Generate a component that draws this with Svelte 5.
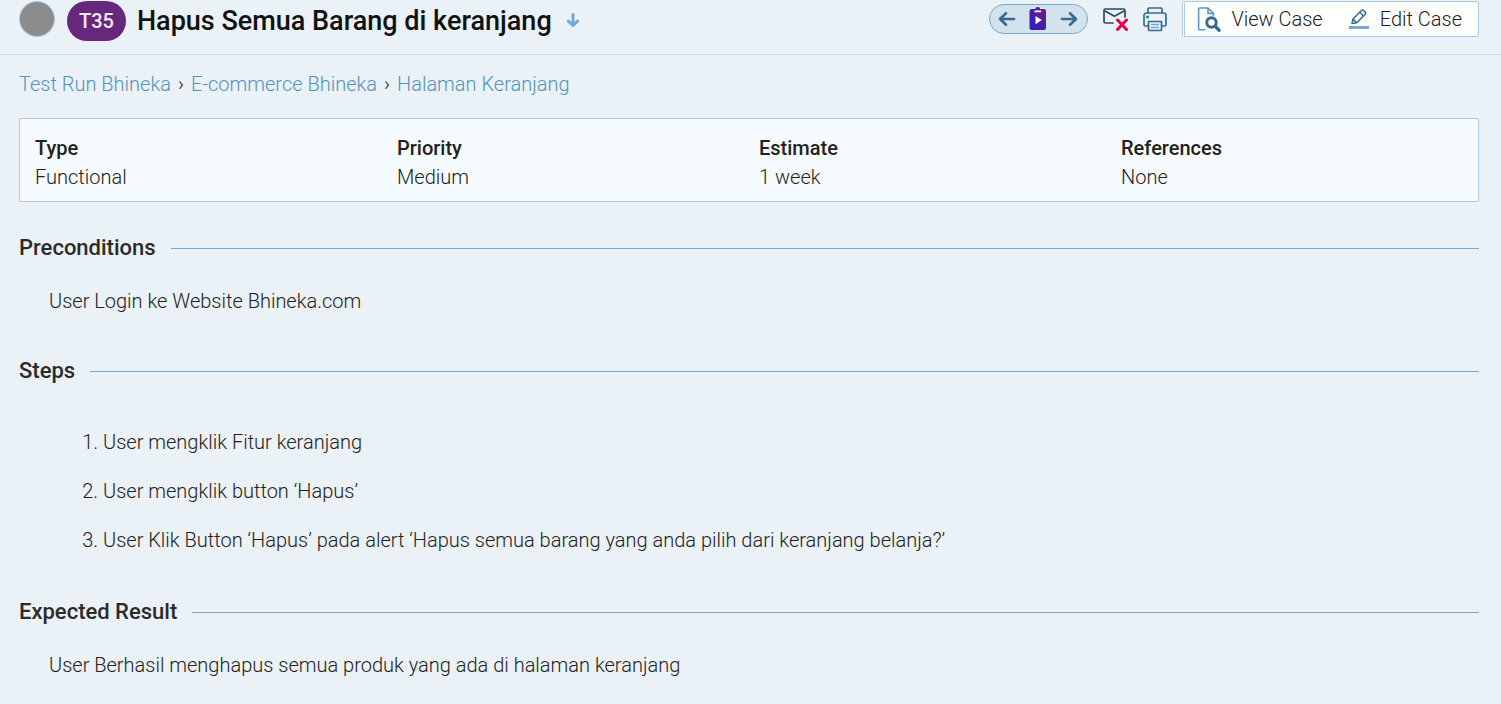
<script>
  const crumbs = ['Test Run Bhineka', 'E-commerce Bhineka', 'Halaman Keranjang'];
  const fields = [
    { label: 'Type', value: 'Functional' },
    { label: 'Priority', value: 'Medium' },
    { label: 'Estimate', value: '1 week' },
    { label: 'References', value: 'None' }
  ];
  const steps = [
    'User mengklik Fitur keranjang',
    'User mengklik button ‘Hapus’',
    'User Klik Button ‘Hapus’ pada alert ‘Hapus semua barang yang anda pilih dari keranjang belanja?’'
  ];
</script>

<header>
  <span class="status"></span>
  <span class="badge">T35</span>
  <h1>Hapus Semua Barang di keranjang</h1>
  <button class="plain" aria-label="Jump down">
    <svg width="14" height="16" viewBox="0 0 14 16" fill="none" stroke="#76a9cf" stroke-width="3" stroke-linecap="round" stroke-linejoin="round">
      <path d="M7 1.500v11M2.300 8.100 7 12.500l4.700-4.400" />
    </svg>
  </button>

  <div class="tools">
    <div class="pager">
      <button class="plain" aria-label="Previous test">
        <svg width="18" height="16" viewBox="0 0 18 16" fill="none" stroke="#386a8e" stroke-width="2.600" stroke-linecap="round" stroke-linejoin="round">
          <path d="M16 8H2.500M8 2.200 2 8l6 5.800" />
        </svg>
      </button>
      <button class="plain" aria-label="Run test">
        <svg width="18" height="24" viewBox="0 0 18 24">
          <defs>
            <linearGradient id="clip" x1="1" y1="0" x2="0" y2="1">
              <stop offset="0.100" stop-color="#67217b" />
              <stop offset="1" stop-color="#2a1bd0" />
            </linearGradient>
          </defs>
          <path d="M2.500 2H6.500V1.500A1.500 1.500 0 0 1 8 0h1.500A1.500 1.500 0 0 1 11 1.500V2h4a2 2 0 0 1 2 2v17a2 2 0 0 1-2 2H2.500a2 2 0 0 1-2-2V4a2 2 0 0 1 2-2Z" fill="url(#clip)" />
          <path d="M6.200 4.300h5.200" stroke="#fff" stroke-width="1.800" stroke-linecap="round" />
          <path d="M6.500 9v8.200l6.300-4.100Z" fill="#fff" />
        </svg>
      </button>
      <button class="plain" aria-label="Next test">
        <svg width="18" height="16" viewBox="0 0 18 16" fill="none" stroke="#386a8e" stroke-width="2.600" stroke-linecap="round" stroke-linejoin="round">
          <path d="M2 8h13.500M10 2.200 16 8l-6 5.800" />
        </svg>
      </button>
    </div>

    <button class="plain" aria-label="Unsubscribe">
      <svg width="26" height="26" viewBox="0 0 26 26" fill="none" stroke-linecap="round" stroke-linejoin="round">
        <path d="M11 17H3.500A1.500 1.500 0 0 1 2 15.500v-11A1.500 1.500 0 0 1 3.500 3h18A1.500 1.500 0 0 1 23 4.500V11M3.500 5.300l9 5 9-5" stroke="#2c4a60" stroke-width="1.700" />
        <path d="m15.500 14 9 9.500m0-9.500-9 9.500" stroke="#e6004c" stroke-width="3" />
      </svg>
    </button>
    <button class="plain" aria-label="Print">
      <svg width="26" height="26" viewBox="0 0 26 26" fill="none" stroke="#386a8e" stroke-width="1.700" stroke-linejoin="round">
        <path d="M6 7V3.200A1.200 1.200 0 0 1 7.200 2h11.600A1.200 1.200 0 0 1 20 3.200V7M6 20H3.500A1.500 1.500 0 0 1 2 18.500V9.500A2.500 2.500 0 0 1 4.500 7h17A2.500 2.500 0 0 1 24 9.500v9a1.500 1.500 0 0 1-1.500 1.500H20" />
        <path d="M6.500 15.500h13v8a1 1 0 0 1-1 1h-11a1 1 0 0 1-1-1Z" />
        <path d="M9 18.500h8M9 21.500h8" stroke="#76a9cf" stroke-width="1.500" />
        <circle cx="5.500" cy="11" r="1.600" fill="#079b6b" stroke="none" />
      </svg>
    </button>

    <nav class="switch">
      <a href="#view">
        <svg width="24" height="26" viewBox="0 0 24 26" fill="none">
          <path d="M8.500 23.700H2.600a1 1 0 0 1-1-1V3a1 1 0 0 1 1-1H11l5.400 5.400V10M11 2v5.400h5.400" stroke="#5d97c2" stroke-width="1.600" />
          <circle cx="14.500" cy="16.500" r="4.700" stroke="#386a8e" stroke-width="3" />
          <path d="m18.300 20.300 3.700 3.900" stroke="#386a8e" stroke-width="3.400" stroke-linecap="round" />
        </svg>
        View Case
      </a>
      <a href="#edit">
        <svg width="22" height="22" viewBox="0 0 22 22" fill="none">
          <path d="M4 15.500 5 11 13.400 2.500a1.500 1.500 0 0 1 2.200 0l1.600 1.600a1.500 1.500 0 0 1 0 2.200L8.700 14.700ZM11.800 4.300l3.700 3.700M5 11l3.700 3.700" stroke="#386a8e" stroke-width="1.500" stroke-linejoin="round" />
          <path d="M2 19.500h18" stroke="#76a9cf" stroke-width="2.800" stroke-linecap="round" />
        </svg>
        Edit Case
      </a>
    </nav>
  </div>
</header>

<main>
  <nav class="crumbs" aria-label="Breadcrumb">
    {#each crumbs as crumb, i}
      {#if i > 0}<span>›</span>{/if}
      <a href="#section-{i}">{crumb}</a>
    {/each}
  </nav>

  <dl>
    {#each fields as field}
      <div>
        <dt>{field.label}</dt>
        <dd>{field.value}</dd>
      </div>
    {/each}
  </dl>

  <section>
    <h2>Preconditions</h2>
    <p>User Login ke Website Bhineka.com</p>
  </section>

  <section>
    <h2>Steps</h2>
    <ol>
      {#each steps as step}
        <li>{step}</li>
      {/each}
    </ol>
  </section>

  <section>
    <h2>Expected Result</h2>
    <p>User Berhasil menghapus semua produk yang ada di halaman keranjang</p>
  </section>
</main>

<style>
  :global(body) {
    margin: 0;
    background: #eaf1f7;
    color: #222;
    font: 300 20px/28px Roboto, 'Liberation Sans', sans-serif;
  }

  svg {
    display: block;
    flex: none;
  }

  a {
    text-decoration: none;
  }

  .plain {
    display: flex;
    padding: 0;
    border: 0;
    background: none;
    cursor: pointer;
  }

  header {
    display: flex;
    align-items: center;
    padding: 0 22px 12px 19px;
    border-bottom: 1px solid #cde0ec;
  }

  .status {
    box-sizing: border-box;
    flex: none;
    align-self: flex-start;
    width: 36px;
    height: 36px;
    margin: 1px 12px 0 0;
    border: 1px solid #a9cbe2;
    border-radius: 50%;
    background: #8c8c8c;
  }

  .badge {
    padding: 0 12px;
    border-radius: 20px;
    background: #67287c;
    color: #f2eaf5;
    font-weight: 500;
    line-height: 40px;
  }

  h1 {
    margin: 0 14px 0 11px;
    color: #111;
    font-size: 27px;
    font-weight: 500;
    line-height: 42px;
    white-space: nowrap;
  }

  .tools {
    display: flex;
    align-items: center;
    align-self: flex-start;
    gap: 14px;
    margin: 1px 0 0 auto;
  }

  .pager {
    box-sizing: border-box;
    display: flex;
    align-items: center;
    justify-content: space-between;
    width: 99px;
    height: 30px;
    padding: 0 9px 0 8px;
    border: 1px solid #76a9cf;
    border-radius: 15px;
    background: #d3e3ed;
  }

  .switch {
    display: flex;
    gap: 25px;
    padding: 3px 16px 3px 12px;
    border: 1px solid #abcbe0;
    border-left: 3px double #abcbe0;
    border-radius: 3px;
    background: #fff;
    white-space: nowrap;
  }

  .switch a {
    display: flex;
    align-items: center;
    gap: 10px;
    color: #222;
  }

  main {
    padding: 15px 22px 0 19px;
  }

  .crumbs {
    display: flex;
    gap: 7px;
  }

  .crumbs a {
    color: #5592bf;
  }

  dl {
    display: grid;
    grid-template-columns: repeat(4, 1fr);
    column-gap: 5px;
    margin: 20px 0 32px;
    padding: 15px 0 9px 15px;
    border: 1px solid #abcbe0;
    border-radius: 2px;
    background: #f6fbff;
  }

  dt,
  dd {
    margin: 0;
    line-height: 29px;
  }

  dt {
    font-weight: 500;
  }

  h2 {
    display: flex;
    align-items: center;
    gap: 15px;
    margin: 0;
    color: #2b2b2b;
    font-size: 22px;
    font-weight: 500;
    line-height: 28px;
  }

  h2::after {
    content: '';
    flex: 1;
    height: 1px;
    background: #76a9cf;
  }

  p {
    margin: 25px 30px 42px;
  }

  section:last-child p {
    margin-bottom: 0;
  }

  ol {
    display: grid;
    gap: 21px;
    margin: 43px 0 44px;
    padding-left: 84px;
  }
</style>
